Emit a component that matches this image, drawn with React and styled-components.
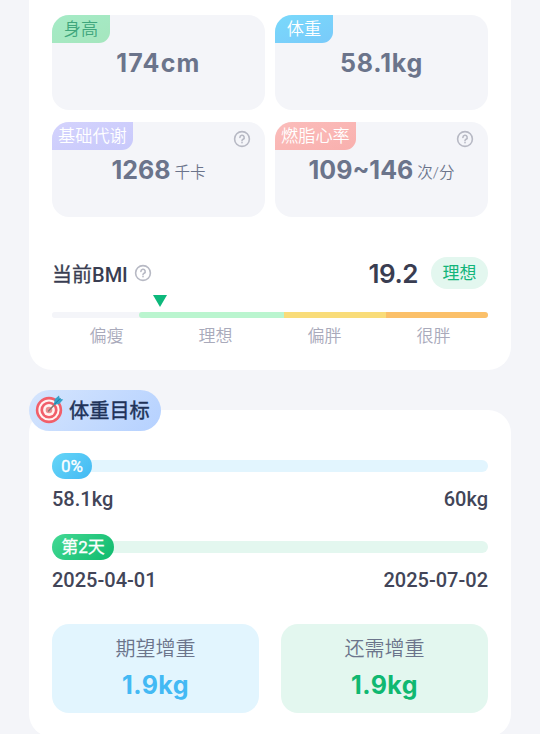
import styled, { createGlobalStyle } from "styled-components"

const metrics = [
    { label: "身高", value: "174cm", spacing: 1.2, color: "#3fa67c", from: "#a5ebc6", to: "#a5e6be" },
    { label: "体重", value: "58.1kg", spacing: 0.8, color: "#ffffff", from: "#79d9fb", to: "#79cafa" },
    { label: "基础代谢", value: "1268", unit: "千卡", spacing: 0, color: "#ffffff", from: "#d4d3fd", to: "#c8c9fb", help: true },
    { label: "燃脂心率", value: "109~146", unit: "次/分", spacing: 0, color: "#ffffff", from: "#fbbdbb", to: "#f9b0ae", help: true },
]

const bmiLevels = [
    { label: "偏瘦", width: 87, color: "#f4f5f9" },
    { label: "理想", width: 145, color: "#baf5cf" },
    { label: "偏胖", width: 102, color: "#f9dc79" },
    { label: "很胖", width: 102, color: "#fbc069" },
]

const HelpIcon = () => (
    <StyledHelpIcon viewBox="0 0 18 18">
        <circle cx="9" cy="9" r="7.4" />
        <path d="M6.9 7.4a2.15 2.15 0 1 1 3.2 1.9c-.75.4-1.1.7-1.1 1.4" />
        <path d="M9 12.5v.2" />
    </StyledHelpIcon>
)

const TargetIcon = () => (
    <StyledTargetIcon viewBox="0 0 30 30">
        <circle cx="14" cy="16" r="13.2" fill="#f15f6a" />
        <circle cx="14" cy="16" r="10.6" fill="#fff4f2" />
        <circle cx="14" cy="16" r="8.6" fill="#f15f6a" />
        <circle cx="14" cy="16" r="5.9" fill="#fff4f2" />
        <circle cx="14" cy="16" r="3.3" fill="#ee8f90" />
        <path d="M13.5 17 20.5 9.5" stroke="#8b7771" strokeWidth="1.6" strokeLinecap="round" />
        <path d="m19 10 .6-4.7 4.4-3.8.8 3.2 3.4.9-4 4.3-5 .8Z" fill="#35a2c9" />
        <path d="m19.5 10.2 6-6" stroke="#187c9e" strokeWidth="1" />
    </StyledTargetIcon>
)

const Metric = ({ item }) => (
    <StyledMetric>
        <StyledMetricLabel $color={item.color} $from={item.from} $to={item.to}>
            {item.label}
        </StyledMetricLabel>
        {item.help && <StyledMetricHelp><HelpIcon /></StyledMetricHelp>}
        <StyledMetricValue>
            <StyledNumber $spacing={item.spacing}>{item.value}</StyledNumber>
            {item.unit && <StyledUnit>{item.unit}</StyledUnit>}
        </StyledMetricValue>
    </StyledMetric>
)

const Progress = ({ badge, badgeWidth, badgeBackground, track, start, end }) => (
    <StyledProgress>
        <StyledTrack $color={track}>
            <StyledBadge $width={badgeWidth} $background={badgeBackground}>{badge}</StyledBadge>
        </StyledTrack>
        <StyledRange>
            <span>{start}</span>
            <span>{end}</span>
        </StyledRange>
    </StyledProgress>
)

export default function App() {
    return (
        <StyledPage>
            <GlobalStyle />
            <StyledBodyCard>
                <StyledMetrics>
                    {metrics.map((item) => <Metric key={item.label} item={item} />)}
                </StyledMetrics>
                <StyledBmiHeader>
                    <StyledBmiTitle>当前<b>BMI</b></StyledBmiTitle>
                    <HelpIcon />
                    <StyledBmiValue>19.2</StyledBmiValue>
                    <StyledBmiTag>理想</StyledBmiTag>
                </StyledBmiHeader>
                <StyledMarker viewBox="0 0 14 12">
                    <path d="M0 0h14L7 12Z" fill="#0db87b" />
                </StyledMarker>
                <StyledScale>
                    {bmiLevels.map((level) => (
                        <StyledLevel key={level.label} $width={level.width} $color={level.color} />
                    ))}
                </StyledScale>
                <StyledLevelLabels>
                    {bmiLevels.map((level) => <span key={level.label}>{level.label}</span>)}
                </StyledLevelLabels>
            </StyledBodyCard>

            <StyledGoalCard>
                <StyledGoalTitle>
                    <TargetIcon />
                    体重目标
                </StyledGoalTitle>
                <Progress
                    badge="0%"
                    badgeWidth={40}
                    badgeBackground="linear-gradient(135deg, #66d6f7, #43b9f4)"
                    track="#e2f5fe"
                    start="58.1kg"
                    end="60kg"
                />
                <Progress
                    badge="第2天"
                    badgeWidth={62}
                    badgeBackground="linear-gradient(135deg, #43d994, #0fba6d)"
                    track="#e3f7ef"
                    start="2025-04-01"
                    end="2025-07-02"
                />
                <StyledSummaries>
                    <StyledSummary $background="#e2f5fe">
                        <StyledSummaryLabel>期望增重</StyledSummaryLabel>
                        <StyledSummaryValue $color="#43b9f4">1.9kg</StyledSummaryValue>
                    </StyledSummary>
                    <StyledSummary $background="#e3f7ef">
                        <StyledSummaryLabel>还需增重</StyledSummaryLabel>
                        <StyledSummaryValue $color="#10b871">1.9kg</StyledSummaryValue>
                    </StyledSummary>
                </StyledSummaries>
            </StyledGoalCard>
        </StyledPage>
    )
}

const GlobalStyle = createGlobalStyle`
    * {
        box-sizing: border-box;
    }

    body {
        margin: 0;
        background: #f4f5f9;
        font-family: Roboto, "Noto Sans CJK SC", sans-serif;
    }
`

const StyledPage = styled.main`
    display: flex;
    flex-direction: column;
    gap: 40px;
    height: 734px;
    overflow: hidden;
    padding: 0 29px;
`

const StyledCard = styled.section`
    display: flex;
    flex-direction: column;
    flex-shrink: 0;
    background: #ffffff;
    padding: 0 23px;
`

const StyledBodyCard = styled(StyledCard)`
    height: 370px;
    padding-top: 15px;
    border-radius: 0 0 23px 23px;
`

const StyledGoalCard = styled(StyledCard)`
    height: 327px;
    border-radius: 23px;
`

const StyledMetrics = styled.div`
    display: grid;
    grid-template-columns: 1fr 1fr;
    grid-auto-rows: 95px;
    gap: 12px 10px;
`

const StyledMetric = styled.div`
    position: relative;
    display: flex;
    flex-direction: column;
    align-items: flex-start;
    overflow: hidden;
    border-radius: 17px;
    background: #f4f5f9;
`

const StyledMetricLabel = styled.div`
    height: 28px;
    padding: 0 6px;
    min-width: 58px;
    border-bottom-right-radius: 11px;
    background: linear-gradient(160deg, ${({ $from }) => $from}, ${({ $to }) => $to});
    color: ${({ $color }) => $color};
    font-size: 17.2px;
    font-weight: 350;
    line-height: 29px;
    text-align: center;
    white-space: nowrap;
`

const StyledMetricHelp = styled.div`
    position: absolute;
    top: 8px;
    right: 14px;
    display: flex;
`

const StyledMetricValue = styled.div`
    display: flex;
    align-items: baseline;
    justify-content: center;
    gap: 4px;
    width: 100%;
    height: 40px;
    line-height: 40px;
    color: #6b748b;
`

const StyledNumber = styled.span`
    font-family: Inter, sans-serif;
    font-size: 25px;
    font-weight: 700;
    letter-spacing: ${({ $spacing }) => $spacing}px;
`

const StyledUnit = styled.span`
    font-size: 15.5px;
    font-weight: 350;
    transform: translateY(-1px);
`

const StyledHelpIcon = styled.svg`
    width: 18px;
    height: 18px;
    flex-shrink: 0;
    fill: none;
    stroke: #b7b9c4;
    stroke-width: 1.6;
    stroke-linecap: round;
`

const StyledBmiHeader = styled.div`
    display: flex;
    align-items: center;
    height: 32px;
    margin-top: 40px;
    color: #393d51;
`

const StyledBmiTitle = styled.h2`
    margin: 0 6px 0 0;
    font-size: 20px;
    font-weight: 400;
    -webkit-text-stroke: 0.3px currentColor;

    b {
        font-weight: 500;
        -webkit-text-stroke: 0;
    }
`

const StyledBmiValue = styled.span`
    margin-left: auto;
    font-family: Inter, sans-serif;
    font-size: 26px;
    font-weight: 600;
    letter-spacing: -0.5px;
`

const StyledBmiTag = styled.span`
    width: 57px;
    height: 32px;
    margin-left: 13px;
    border-radius: 16px;
    background: #e3f7ef;
    color: #12b57a;
    font-size: 17px;
    line-height: 32px;
    text-align: center;
`

const StyledMarker = styled.svg`
    width: 14px;
    height: 12px;
    margin: 6px 0 5px 101px;
`

const StyledScale = styled.div`
    display: flex;
    height: 6px;
    overflow: hidden;
    border-radius: 3px;
    background: #f4f5f9;
`

const StyledLevel = styled.div`
    width: ${({ $width }) => $width}px;
    border-radius: 3px 0 0 3px;
    background: ${({ $color }) => $color};

    & + & + & {
        border-radius: 0;
    }
`

const StyledLevelLabels = styled.div`
    display: grid;
    grid-template-columns: repeat(4, 1fr);
    margin-top: 6px;
    color: #a9aabb;
    font-size: 17px;
    font-weight: 350;
    line-height: 24px;
    text-align: center;
`

const StyledGoalTitle = styled.h2`
    display: flex;
    align-items: center;
    gap: 4px;
    width: 132px;
    height: 41px;
    margin: -20px 0 22px -23px;
    padding: 0 0 3px 6px;
    border-radius: 21px;
    background: linear-gradient(135deg, #d5e5fd, #b5d1ff);
    color: #203258;
    font-size: 20.2px;
    font-weight: 400;
    white-space: nowrap;
    -webkit-text-stroke: 0.4px currentColor;
`

const StyledTargetIcon = styled.svg`
    width: 30px;
    height: 30px;
    flex-shrink: 0;
    fill: none;
`

const StyledProgress = styled.div`
    display: flex;
    flex-direction: column;
    height: 81px;
    padding-top: 7px;
`

const StyledTrack = styled.div`
    display: flex;
    align-items: center;
    height: 12px;
    border-radius: 6px;
    background: ${({ $color }) => $color};
`

const StyledBadge = styled.span`
    width: ${({ $width }) => $width}px;
    height: 26px;
    border-radius: 13px;
    background: ${({ $background }) => $background};
    color: #ffffff;
    font-size: 17px;
    font-weight: 400;
    line-height: 26px;
    text-align: center;
    -webkit-text-stroke: 0.3px currentColor;
`

const StyledRange = styled.div`
    display: flex;
    justify-content: space-between;
    margin-top: 15px;
    color: #424558;
    font-size: 20px;
    font-weight: 500;
    line-height: 24px;
`

const StyledSummaries = styled.div`
    display: grid;
    grid-template-columns: 1fr 1fr;
    gap: 22px;
    margin-top: 9px;
`

const StyledSummary = styled.div`
    display: flex;
    flex-direction: column;
    align-items: center;
    height: 89px;
    padding-top: 11px;
    border-radius: 17px;
    background: ${({ $background }) => $background};
`

const StyledSummaryLabel = styled.span`
    color: #6b748b;
    font-size: 20px;
    font-weight: 350;
    line-height: 29px;
`

const StyledSummaryValue = styled.strong`
    margin-top: 3px;
    color: ${({ $color }) => $color};
    font-family: Inter, sans-serif;
    font-size: 25px;
    font-weight: 700;
    line-height: 36px;
    letter-spacing: 0.4px;
`
